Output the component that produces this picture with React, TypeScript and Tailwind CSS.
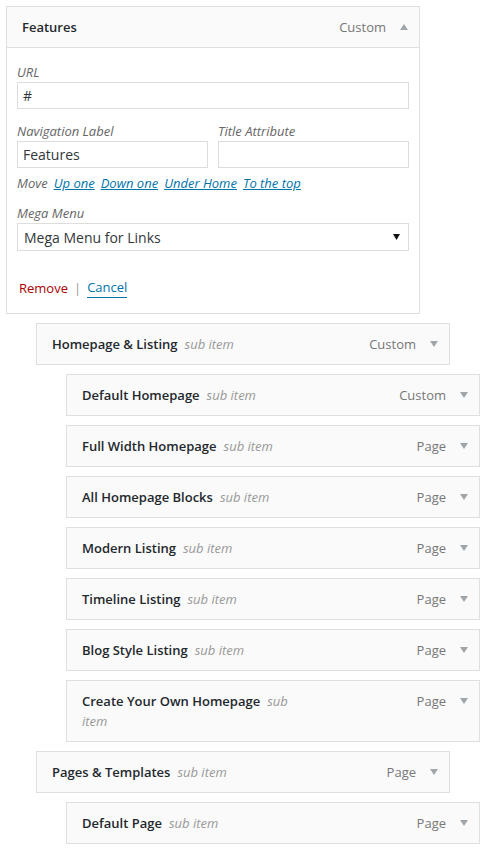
import React from 'react';

type Item = { title: string; type: string; depth: 1 | 2 };

const items: Item[] = [
  { title: 'Homepage & Listing', type: 'Custom', depth: 1 },
  { title: 'Default Homepage', type: 'Custom', depth: 2 },
  { title: 'Full Width Homepage', type: 'Page', depth: 2 },
  { title: 'All Homepage Blocks', type: 'Page', depth: 2 },
  { title: 'Modern Listing', type: 'Page', depth: 2 },
  { title: 'Timeline Listing', type: 'Page', depth: 2 },
  { title: 'Blog Style Listing', type: 'Page', depth: 2 },
  { title: 'Create Your Own Homepage', type: 'Page', depth: 2 },
  { title: 'Pages & Templates', type: 'Page', depth: 1 },
  { title: 'Default Page', type: 'Page', depth: 2 },
];

function Arrow({ up = false }: { up?: boolean }) {
  return (
    <svg width="8" height="6" viewBox="0 0 8 6" className="ml-[14px] shrink-0">
      {up ? <path d="M0 6 L4 0 L8 6 Z" fill="#a0a5aa" /> : <path d="M0 0 L8 0 L4 6 Z" fill="#a0a5aa" />}
    </svg>
  );
}

function Handle({ title, type, sub = true, up = false }: { title: string; type: string; sub?: boolean; up?: boolean }) {
  return (
    <div className="flex items-start border border-[#dfdfdf] bg-[#fafafa] py-[10px] pl-[15px] pr-[11px] leading-5">
      <div className="w-[213px] shrink-0 text-[13px]">
        <span className="font-semibold text-[#23282d]">{title}</span>
        {sub && <span className="ml-[7px] italic text-[#999]">sub item</span>}
      </div>
      <div className="ml-auto flex h-5 items-center text-[13px] text-[#777]">
        {type}
        <Arrow up={up} />
      </div>
    </div>
  );
}

export default function App() {
  return (
    <div className="min-h-[850px] bg-white pl-[6px] pt-[6px] text-[13px]" style={{ fontFamily: '"Open Sans", sans-serif' }}>
      <div className="w-[414px]">
        <Handle title="Features" type="Custom" sub={false} up />
        <div className="border border-t-0 border-[#dfdfdf] bg-white px-[10px] pb-[15px] pt-[14px]">
          <div className="italic leading-5 text-[#666]">URL</div>
          <div className="flex h-[27px] items-center border border-[#ddd] px-[5px] text-[14px] text-[#32373c]">#</div>
          <div className="mt-[12px] flex gap-[10px]">
            <div className="flex-1">
              <div className="italic leading-5 text-[#666]">Navigation Label</div>
              <div className="flex h-[27px] items-center border border-[#ddd] px-[5px] text-[14px] text-[#32373c]">Features</div>
            </div>
            <div className="flex-1">
              <div className="italic leading-5 text-[#666]">Title Attribute</div>
              <div className="h-[27px] border border-[#ddd]"></div>
            </div>
          </div>
          <div className="mt-[5px] flex gap-[6px] italic leading-5 text-[#666]">
            <span>Move</span>
            <span className="text-[#0073aa] underline">Up one</span>
            <span className="text-[#0073aa] underline">Down one</span>
            <span className="text-[#0073aa] underline">Under Home</span>
            <span className="text-[#0073aa] underline">To the top</span>
          </div>
          <div className="mt-[10px] italic leading-5 text-[#666]">Mega Menu</div>
          <div className="flex h-[28px] items-center justify-between border border-[#ddd] pl-[6px] pr-[8px] text-[14px] text-[#32373c]">
            <span>Mega Menu for Links</span>
            <svg width="7" height="6" viewBox="0 0 7 6">
              <path d="M0 0 L7 0 L3.5 6 Z" fill="#111" />
            </svg>
          </div>
          <div className="mt-[26px] flex items-center pl-[2px] text-[13px] leading-5">
            <span className="text-[#a00]">Remove</span>
            <span className="mx-[6px] text-[#999]">|</span>
            <span className="border-b border-[#0073aa] text-[#0073aa]">Cancel</span>
          </div>
        </div>
      </div>
      <div className="mt-[9px] flex flex-col gap-[9px]">
        {items.map((it) => (
          <div key={it.title} className={it.depth === 1 ? 'ml-[30px] w-[414px]' : 'ml-[60px] w-[414px]'}>
            <Handle title={it.title} type={it.type} />
          </div>
        ))}
      </div>
    </div>
  );
}
